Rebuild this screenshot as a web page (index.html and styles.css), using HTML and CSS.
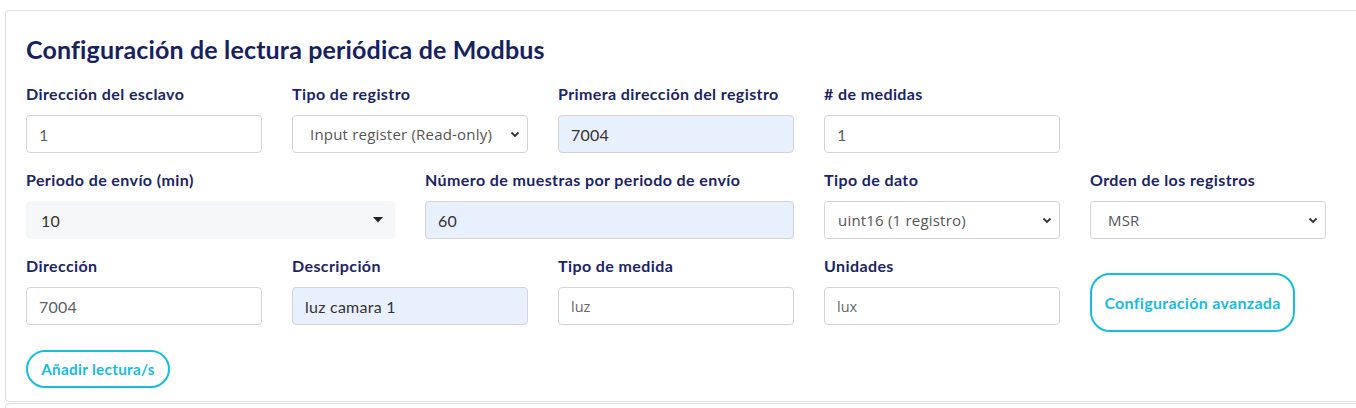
FILE: index.html
```html
<!DOCTYPE html>
<html lang="es">
<head>
<meta charset="utf-8">
<title>Modbus</title>
<link rel="stylesheet" href="styles.css">
</head>
<body>
<div class="card">
  <h2 class="title">Configuración de lectura periódica de Modbus</h2>
  <div class="grid">
    <div class="field s2">
      <label class="lbl">Dirección del esclavo</label>
      <input class="ctl" type="text" value="1">
    </div>
    <div class="field s2">
      <label class="lbl">Tipo de registro</label>
      <div class="sel">
        <div class="ctl sel-box"><span class="sel-txt">Input register (Read-only)</span></div>
        <svg class="chev" width="10" height="7" viewBox="0 0 10 7"><path d="M1.5 1.5 L5 5 L8.5 1.5" fill="none" stroke="#333" stroke-width="1.8"/></svg>
      </div>
    </div>
    <div class="field s2">
      <label class="lbl">Primera dirección del registro</label>
      <input class="ctl auto dark" type="text" value="7004">
    </div>
    <div class="field s2">
      <label class="lbl"># de medidas</label>
      <input class="ctl" type="text" value="1">
    </div>
    <div class="field s2"></div>

    <div class="field s3">
      <label class="lbl">Periodo de envío (min)</label>
      <div class="sel">
        <div class="ctl flat"><span>10</span></div>
        <svg class="caret" width="10" height="6" viewBox="0 0 10 6"><path d="M0 0 L10 0 L5 5.5 Z" fill="#222"/></svg>
      </div>
    </div>
    <div class="field s3">
      <label class="lbl">Número de muestras por periodo de envío</label>
      <input class="ctl auto dark" type="text" value="60">
    </div>
    <div class="field s2">
      <label class="lbl">Tipo de dato</label>
      <div class="sel">
        <div class="ctl sel-box sm"><span class="sel-txt">uint16 (1 registro)</span></div>
        <svg class="chev" width="10" height="7" viewBox="0 0 10 7"><path d="M1.5 1.5 L5 5 L8.5 1.5" fill="none" stroke="#333" stroke-width="1.8"/></svg>
      </div>
    </div>
    <div class="field s2">
      <label class="lbl">Orden de los registros</label>
      <div class="sel">
        <div class="ctl sel-box"><span class="sel-txt">MSR</span></div>
        <svg class="chev" width="10" height="7" viewBox="0 0 10 7"><path d="M1.5 1.5 L5 5 L8.5 1.5" fill="none" stroke="#333" stroke-width="1.8"/></svg>
      </div>
    </div>
    <div class="field s2"></div>

    <div class="field s2">
      <label class="lbl">Dirección</label>
      <input class="ctl" type="text" value="7004">
    </div>
    <div class="field s2">
      <label class="lbl">Descripción</label>
      <input class="ctl auto dark" type="text" value="luz camara 1">
    </div>
    <div class="field s2">
      <label class="lbl">Tipo de medida</label>
      <input class="ctl thin" type="text" value="luz">
    </div>
    <div class="field s2">
      <label class="lbl">Unidades</label>
      <input class="ctl thin" type="text" value="lux">
    </div>
    <div class="field s2">
      <button class="btn big">Configuración avanzada</button>
    </div>
  </div>
  <button class="btn pill">Añadir lectura/s</button>
</div>
<div class="card next"></div>
</body>
</html>
```

FILE: styles.css
```css
html, body {
  margin: 0;
  padding: 0;
  background: #ffffff;
}
body {
  padding: 10px 0 0 5px;
  font-family: "Lato", "Open Sans", sans-serif;
  overflow: hidden;
  height: 408px;
  box-sizing: border-box;
}
.card {
  width: 1620px;
  border: 1px solid #dedede;
  border-radius: 4px;
  padding: 21px 20px 20px 20px;
  box-sizing: border-box;
  height: 392px;
}
.card.next {
  margin-top: 1px;
  height: 40px;
}
.title {
  margin: 0 0 19px 0;
  font-size: 25px;
  letter-spacing: 0.15px;
  line-height: 34px;
  font-weight: 700;
  color: #16215f;
}
.grid {
  display: grid;
  grid-template-columns: repeat(12, 103px);
  column-gap: 30px;
}
.s2 { grid-column: span 2; }
.s3 { grid-column: span 3; }
.field {
  display: flex;
  flex-direction: column;
  margin-bottom: 18px;
}
.lbl {
  display: block;
  font-size: 16px;
  letter-spacing: 0.4px;
  line-height: 18px;
  font-weight: 700;
  color: #1b2566;
  margin-bottom: 12px;
  white-space: nowrap;
}
.ctl {
  display: flex;
  align-items: center;
  box-sizing: border-box;
  width: 100%;
  height: 38px;
  margin: 0;
  border: 1px solid #d2d4da;
  border-radius: 4px;
  background: #ffffff;
  padding: 0 12px;
  font-family: "Lato", "Open Sans", sans-serif;
  font-size: 16px;
  letter-spacing: 0.25px;
  color: #5c5f66;
  outline: none;
}
.ctl.auto {
  background: #e8f0fe;
}
.ctl.dark {
  color: #333333;
}
.ctl.thin {
  font-family: "Open Sans", "Liberation Sans", sans-serif;
  font-size: 14.5px;
  letter-spacing: 0;
  color: #666;
}
.sel {
  position: relative;
}
.sel-box {
  padding-left: 17px;
}
.sel-box.sm {
  padding-left: 13px;
}
.sel-txt {
  font-family: "Open Sans", "Liberation Sans", sans-serif;
  font-size: 15px;
  letter-spacing: 0.2px;
  color: #555;
}
.ctl.flat {
  border: 1px solid #f6f7f9;
  background: #f6f7f9;
  padding-left: 14px;
  color: #333;
}
.chev {
  position: absolute;
  right: 8px;
  top: 16px;
}
.caret {
  position: absolute;
  right: 12px;
  top: 16px;
}
.btn {
  font-family: "Lato", "Open Sans", sans-serif;
  font-weight: 700;
  font-size: 15.3px;
  letter-spacing: 0.3px;
  color: #16bde2;
  background: #ffffff;
  border: 2px solid #16bde2;
  cursor: pointer;
}
.btn.big {
  align-self: flex-start;
  margin-top: 16px;
  width: 205px;
  height: 59px;
  border-radius: 20px;
  padding: 0 6px;
  font-size: 16px;
}
.btn.pill {
  display: block;
  margin-top: 0;
  height: 38px;
  width: 144px;
  border-radius: 19px;
  padding: 0 8px;
}
```
